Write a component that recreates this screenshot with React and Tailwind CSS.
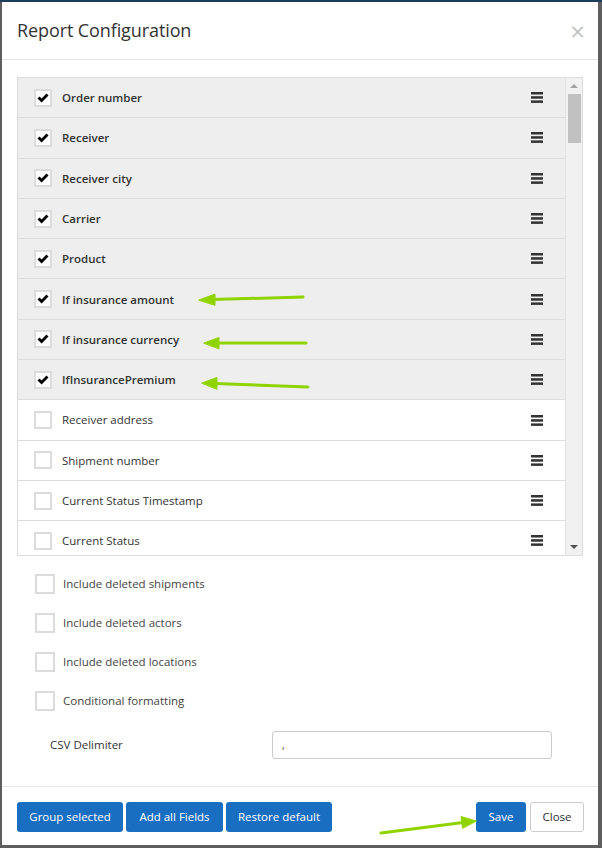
import React from "react";

const fields = [
  { label: "Order number", checked: true },
  { label: "Receiver", checked: true },
  { label: "Receiver city", checked: true },
  { label: "Carrier", checked: true },
  { label: "Product", checked: true },
  { label: "If insurance amount", checked: true },
  { label: "If insurance currency", checked: true },
  { label: "IfInsurancePremium", checked: true },
  { label: "Receiver address", checked: false },
  { label: "Shipment number", checked: false },
  { label: "Current Status Timestamp", checked: false },
  { label: "Current Status", checked: false },
];

const options = [
  "Include deleted shipments",
  "Include deleted actors",
  "Include deleted locations",
  "Conditional formatting",
];

function Bars() {
  return (
    <svg width="12" height="11" viewBox="0 0 12 11" className="block">
      <rect x="0" y="0" width="12" height="2.5" fill="#333" />
      <rect x="0" y="4.2" width="12" height="2.5" fill="#333" />
      <rect x="0" y="8.4" width="12" height="2.5" fill="#333" />
    </svg>
  );
}

function Check() {
  return (
    <svg width="12" height="10" viewBox="0 0 12 10" className="block">
      <path d="M0.5 5.4 L2.5 3.4 L4.6 5.5 L9.5 0.5 L11.5 2.5 L4.6 9.5 Z" fill="#000" />
    </svg>
  );
}

function Box({ checked, size = "w-[18px] h-[18px]" }) {
  return (
    <div className={`${size} border-2 border-[#dcdcdc] bg-white flex items-center justify-center shrink-0`}>
      {checked && <Check />}
    </div>
  );
}

export default function App() {
  return (
    <div
      className="w-[602px] h-[848px] bg-[#5e5e5e] border-t-2 border-[#1d3b5c] pl-[2px] pr-[4px] pb-[3px] relative overflow-hidden"
      style={{ fontFamily: '"Open Sans", "Noto Sans", sans-serif' }}
    >
      <div className="bg-white h-full flex flex-col">
        {/* Header */}
        <div className="h-[58px] border-b border-[#e5e5e5] flex items-center justify-between pl-[15px] pr-[13px] shrink-0">
          <div className="text-[18px] text-[#333] tracking-[-0.1px]">Report Configuration</div>
          <div className="text-[26px] text-[#c2c2c2] leading-none">×</div>
        </div>

        {/* Body */}
        <div className="px-[15px] pt-[17px] flex flex-col">
          <div className="h-[479px] border border-[#ddd] flex overflow-hidden">
            <div className="flex-1 overflow-hidden">
              {fields.map((f, i) => (
                <div
                  key={i}
                  className={`h-[40.3px] border-b border-[#ddd] flex items-center pl-[16px] pr-[22px] ${f.checked ? "bg-[#eeeeee]" : "bg-white"}`}
                >
                  <Box checked={f.checked} />
                  <div
                    className={`ml-[10px] text-[11.5px] text-[#333] flex-1 ${f.checked ? "font-semibold" : ""}`}
                  >
                    {f.label}
                  </div>
                  <Bars />
                </div>
              ))}
            </div>
            <div className="w-[17px] bg-[#f1f1f1] border-l border-[#e2e2e2] flex flex-col items-center shrink-0">
              <div className="h-[16px] flex items-center justify-center">
                <div className="w-0 h-0 border-l-[4px] border-r-[4px] border-b-[4px] border-l-transparent border-r-transparent border-b-[#a3a3a3]" />
              </div>
              <div className="w-[13px] h-[49px] bg-[#c1c1c1]" />
              <div className="flex-1" />
              <div className="h-[16px] flex items-center justify-center">
                <div className="w-0 h-0 border-l-[4px] border-r-[4px] border-t-[4px] border-l-transparent border-r-transparent border-t-[#505050]" />
              </div>
            </div>
          </div>

          <div className="pl-[18px] pt-[18px] flex flex-col gap-[19px]">
            {options.map((o) => (
              <div key={o} className="flex items-center h-[20px]">
                <Box checked={false} size="w-[20px] h-[20px]" />
                <div className="ml-[8px] text-[11.5px] text-[#444]">{o}</div>
              </div>
            ))}
          </div>

          <div className="flex items-center mt-[20px] h-[28px]">
            <div className="w-[255px] pl-[33px] text-[11.5px] text-[#333]">CSV Delimiter</div>
            <div className="w-[280px] h-[28px] border border-[#ccc] rounded-[3px] flex items-center px-[9px] text-[11px] text-[#555]">
              ,
            </div>
          </div>
        </div>

        <div className="flex-1" />

        {/* Footer */}
        <div className="border-t border-[#e5e5e5] h-[59px] pl-[15px] pr-[14px] flex items-center pt-[2px]">
          <div className="flex gap-[3px]">
            <button className="h-[30px] w-[106px] bg-[#1a6ec2] text-white text-[11.5px] rounded-[3px]">Group selected</button>
            <button className="h-[30px] w-[97px] bg-[#1a6ec2] text-white text-[11.5px] rounded-[3px]">Add all Fields</button>
            <button className="h-[30px] w-[106px] bg-[#1a6ec2] text-white text-[11.5px] rounded-[3px]">Restore default</button>
          </div>
          <div className="flex-1" />
          <div className="flex gap-[4px]">
            <button className="h-[30px] w-[50px] bg-[#1a6ec2] text-white text-[11.5px] rounded-[3px]">Save</button>
            <button className="h-[30px] w-[54px] bg-white border border-[#ccc] text-[#333] text-[11.5px] rounded-[3px]">Close</button>
          </div>
        </div>
      </div>

      {/* Annotation arrows */}
      <svg className="absolute left-0 top-0 pointer-events-none" width="602" height="848" viewBox="0 -2 602 848">
        <g fill="#8fd400" stroke="#8fd400" strokeWidth="3" strokeLinecap="round">
          <line x1="303" y1="293" x2="212" y2="295.6" />
          <polygon points="199,296 215,290 215,301" strokeWidth="1" />
          <line x1="306" y1="339" x2="217" y2="339" />
          <polygon points="204,339 219,333.5 219,344.5" strokeWidth="1" />
          <line x1="308" y1="383" x2="215" y2="379.4" />
          <polygon points="202,379 217,373.5 217,385" strokeWidth="1" />
          <line x1="381" y1="829" x2="463" y2="818.6" />
          <polygon points="476,817 461,812.5 462.5,824" strokeWidth="1" />
        </g>
      </svg>
    </div>
  );
}
